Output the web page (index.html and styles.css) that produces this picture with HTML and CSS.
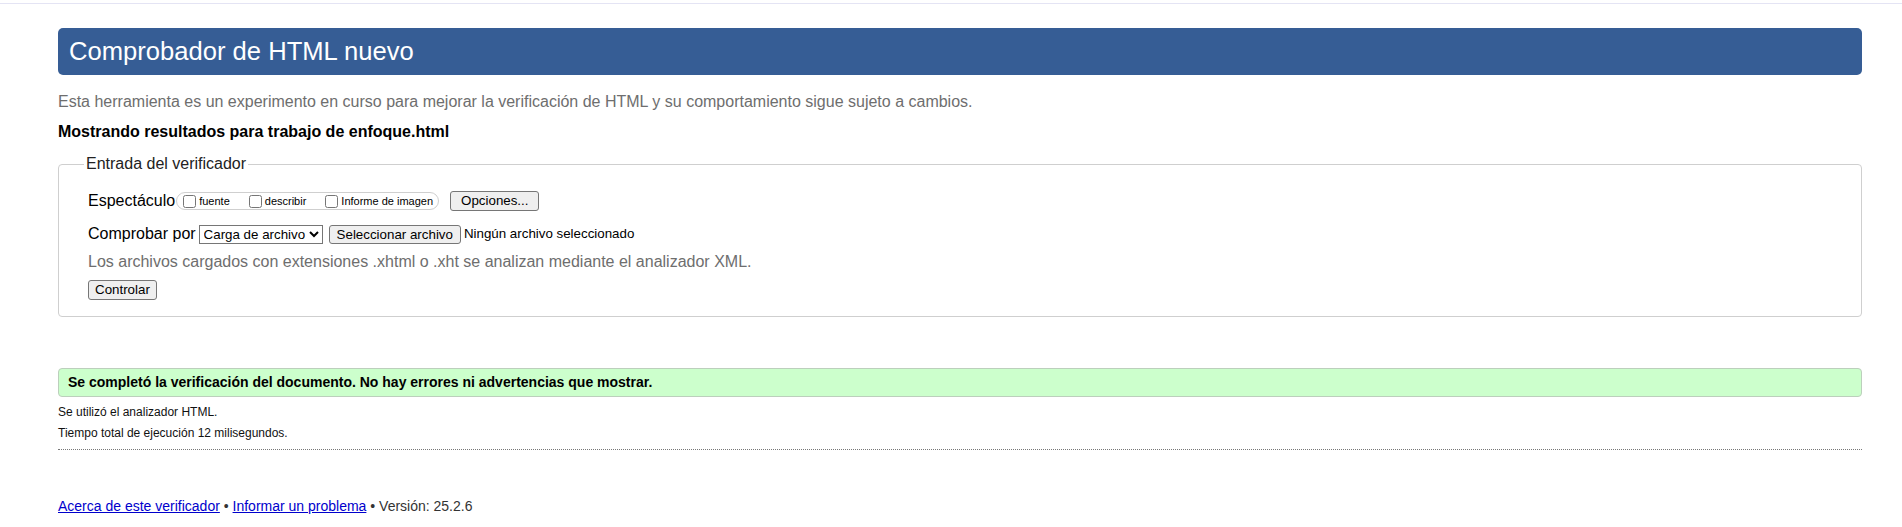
FILE: index.html
```
<!DOCTYPE html>
<html lang="es">
<head>
<meta charset="utf-8">
<title>Comprobador de HTML nuevo</title>
<link rel="stylesheet" href="styles.css">
</head>
<body>
<div class="topline"></div>
<div class="page">
  <h1 class="title">Comprobador de HTML nuevo</h1>
  <p class="desc">Esta herramienta es un experimento en curso para mejorar la verificación de HTML y su comportamiento sigue sujeto a cambios.</p>
  <p class="showing">Mostrando resultados para trabajo de enfoque.html</p>
  <fieldset class="input-box">
    <legend class="legend">Entrada del verificador</legend>
    <div class="row row-show">
      <span class="label">Espectáculo</span>
      <span class="group">
        <label class="opt"><input type="checkbox" class="cb">fuente</label>
        <label class="opt"><input type="checkbox" class="cb">describir</label>
        <label class="opt opt-last"><input type="checkbox" class="cb">Informe de imagen</label>
      </span>
      <button class="btn btn-opts" type="button">Opciones...</button>
    </div>
    <div class="row row-check">
      <span class="label">Comprobar por</span>
      <select class="sel"><option>Carga de archivo</option></select>
      <button class="btn btn-file" type="button">Seleccionar archivo</button>
      <span class="file-none">Ningún archivo seleccionado</span>
    </div>
    <div class="row row-note">Los archivos cargados con extensiones .xhtml o .xht se analizan mediante el analizador XML.</div>
    <div class="row row-submit">
      <button class="btn btn-submit" type="button">Controlar</button>
    </div>
  </fieldset>
  <div class="success">Se completó la verificación del documento. No hay errores ni advertencias que mostrar.</div>
  <p class="stat stat-first">Se utilizó el analizador HTML.</p>
  <p class="stat stat-last">Tiempo total de ejecución 12 milisegundos.</p>
  <p class="footer"><a href="#" class="link">Acerca de este verificador</a> • <a href="#" class="link">Informar un problema</a> • Versión: 25.2.6</p>
</div>
</body>
</html>
```
FILE: styles.css
```
html, body {
  margin: 0;
  padding: 0;
  background: #fff;
}
body {
  font-family: "Liberation Sans", Arial, sans-serif;
  color: #000;
}
.topline {
  margin-top: 3px;
  height: 1px;
  background: #e4e4f4;
}
.page {
  padding: 0 40px 0 58px;
}
.title {
  margin: 24px 0 0;
  height: 47px;
  line-height: 47px;
  padding: 0 11px;
  font-size: 25.6px;
  font-weight: normal;
  color: #fff;
  background: #365d95;
  border-radius: 5px;
}
.desc {
  margin: 17px 0 0;
  font-size: 16px;
  line-height: 20px;
  color: #6e6e6e;
}
.showing {
  margin: 10px 0 0;
  font-size: 16px;
  line-height: 20px;
  font-weight: bold;
}
.input-box {
  margin: 12px 0 0;
  padding: 17px 20px 16px 29px;
  border: 1px solid #cfcfcf;
  border-radius: 4px;
}
.legend {
  margin-left: -4px;
  padding: 0 2px;
  font-size: 16px;
  line-height: 20px;
  color: #222;
}
.row {
  display: flex;
  align-items: center;
  height: 20px;
  font-size: 16px;
  line-height: 20px;
}
.row-check {
  margin-top: 13px;
}
.row-note {
  margin-top: 8px;
  color: #6e6e6e;
}
.row-submit {
  margin-top: 8px;
}
.group {
  display: inline-flex;
  align-items: center;
  height: 18px;
  box-sizing: border-box;
  margin-left: 1px;
  padding: 0 5px 0 2px;
  border: 1px solid #cfcfcf;
  border-radius: 9px;
  font-size: 11px;
}
.opt {
  display: inline-flex;
  align-items: center;
  margin-right: 15px;
  line-height: 13px;
}
.opt-last {
  margin-right: 0;
}
.cb {
  width: 13px;
  height: 13px;
  margin: 0 3px 0 4px;
}
.btn {
  font-family: "Liberation Sans", Arial, sans-serif;
  font-size: 13.33px;
  line-height: 16px;
  padding: 1px 6px;
  border: 1px solid #767676;
  border-radius: 3px;
  background: #efefef;
  color: #000;
  box-sizing: border-box;
  height: 20px;
}
.btn-opts {
  margin-left: 11px;
  padding: 1px 10px;
}
.sel {
  margin-left: 3px;
  height: 19px;
  font-family: "Liberation Sans", Arial, sans-serif;
  font-size: 13.33px;
  border: 1px solid #767676;
  border-radius: 0;
  background: #fff;
  color: #000;
}
.btn-file {
  margin-left: 6px;
  padding: 1px 7px;
  height: 19px;
}
.file-none {
  margin-left: 3px;
  font-size: 13.33px;
}
.success {
  margin-top: 51px;
  height: 29px;
  box-sizing: border-box;
  padding: 0 9px;
  line-height: 27px;
  font-size: 14px;
  font-weight: bold;
  background: #ccffcc;
  border: 1px solid #bccfbc;
  border-radius: 4px;
}
.stat {
  margin: 0;
  font-size: 12px;
  line-height: 20px;
  color: #111;
}
.stat-first {
  margin-top: 5px;
}
.stat-last {
  margin-top: 1px;
  padding-bottom: 6px;
  border-bottom: 1px dotted #777;
}
.footer {
  margin: 46px 0 0;
  font-size: 14px;
  line-height: 20px;
  color: #333;
}
.link {
  color: #0000cc;
}
```
